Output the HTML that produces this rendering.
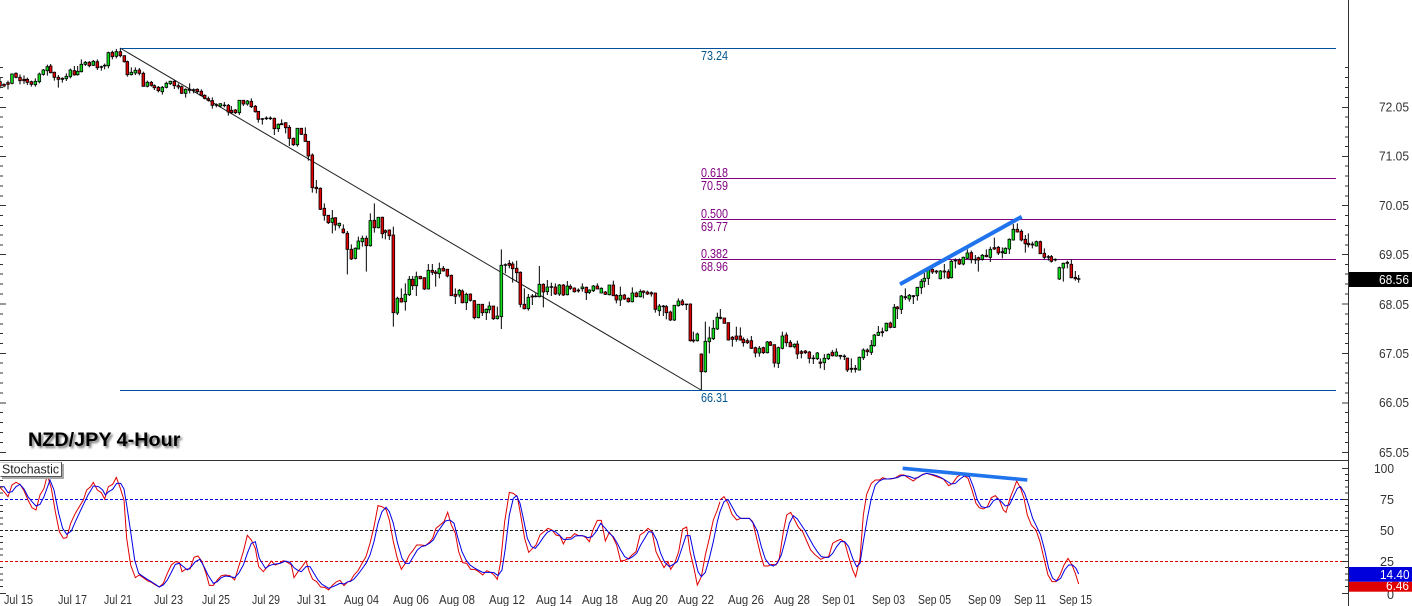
<!DOCTYPE html>
<html>
<head>
<meta charset="utf-8">
<title>NZD/JPY 4-Hour</title>
<style>
html,body{margin:0;padding:0;background:#fff;width:1412px;height:606px;overflow:hidden}
svg{position:absolute;left:0;top:0}
text{font-family:"Liberation Sans",sans-serif;font-size:12.5px}
.ax{fill:#333}
.w{fill:none;stroke:#000;stroke-width:3}
.g{fill:#0ee01a;stroke:#000;stroke-width:2.4}
.r{fill:#e00000;stroke:#000;stroke-width:2.4}
#title{position:absolute;left:28px;top:430px;font:bold 19.8px/20px "Liberation Sans",sans-serif;color:#000;text-shadow:2px 2px 2px #7a7a7a;white-space:nowrap}
</style>
</head>
<body>
<svg width="1412" height="606" viewBox="0 0 1412 606" xmlns="http://www.w3.org/2000/svg">
<rect width="1412" height="606" fill="#fff"/>

<!-- trend line -->
<path d="M120 48L701 390" stroke="#222" stroke-width="1" fill="none"/>

<!-- fib lines -->
<path d="M120 48.5H1336M120 390.5H1336" stroke="#00509e" stroke-width="1" fill="none"/>
<path d="M701 178.5H1336M701 219.5H1336M701 259.5H1336" stroke="#800080" stroke-width="1" fill="none"/>

<!-- candles part 1 -->
<g transform="translate(0,30) scale(.33333)">
<path class="w" d="M0 143V175M12 160V172M24 152V178M36 130V163M48 127V145M60 133V163M72 136V162M82 143V165M94 152V170M106 145V170M118 128V160M130 117V137M142 104V137M152 102V130M163 125V152M175 135V173M187 142V158M199 130V153M211 116V145M223 108V137M233 108V137M244 88V127M256 93V108M268 93V112M280 90V108M292 88V120M304 107V122M314 101V118M325 65V115M337 62V88M349 57V85M361 55V82M373 77V98M382 92V140M394 112V136M406 112V135M418 114V136M430 125V170M442 152V172M454 153V170M463 163V180M475 168V187M487 168V194M499 155V175M511 152V165M523 150V177M535 160V178M545 167V192M557 175V203M569 160V190M581 175V190M592 175V190M604 178V198M614 193V208M625 200V215M637 202V236M649 220V232M661 220V232M673 216V232M685 222V257M694 228V252M706 237V252M718 211V255M730 210V228M742 210V227M754 205V234M766 225V248M775 244V278M787 264V284M799 259V270M811 259V270M823 263V315M835 280V306M845 268V285M857 277V310M868 285V348M880 323V348M892 295V350M904 295V315M916 292V336M925 334V392M937 370V488M949 450V490M961 472V540M973 520V572M985 556V582M997 540V610M1006 562V602M1018 578V595M1030 583V611M1042 603V733"/>
<path class="g" d="M32 132h8V160h-8zM102 154h8V164h-8zM114 132h8V155h-8zM126 120h8V133h-8zM138 110h8V122h-8zM195 139h8V146h-8zM207 120h8V140h-8zM229 124h8V134h-8zM240 103h8V125h-8zM252 97h8V103h-8zM276 94h8V106h-8zM321 68h8V107h-8zM345 65h8V79h-8zM390 127h8V134h-8zM402 121h8V129h-8zM438 157h8V169h-8zM483 172h8V185h-8zM495 160h8V172h-8zM507 154h8V161h-8zM553 178h8V190h-8zM657 221h8V228h-8zM714 211h8V248h-8zM738 213h8V222h-8zM831 283h8V296h-8zM888 295h8V344h-8zM993 565h8V577h-8zM1014 580h8V587h-8z"/>
<path class="r" d="M-4 155h8V168h-8zM8 163h8V168h-8zM20 158h8V163h-8zM44 130h8V142h-8zM56 142h8V152h-8zM68 148h8V152h-8zM78 148h8V157h-8zM90 155h8V163h-8zM148 108h8V128h-8zM159 127h8V142h-8zM171 142h8V148h-8zM183 145h8V148h-8zM219 122h8V135h-8zM264 97h8V107h-8zM288 95h8V113h-8zM300 110h8V112h-8zM310 106h8V108h-8zM333 67h8V80h-8zM357 65h8V77h-8zM369 77h8V95h-8zM378 95h8V134h-8zM414 120h8V130h-8zM426 130h8V169h-8zM450 157h8V166h-8zM459 167h8V173h-8zM471 172h8V182h-8zM519 154h8V167h-8zM531 167h8V171h-8zM541 170h8V190h-8zM565 178h8V181h-8zM577 179h8V181h-8zM588 178h8V185h-8zM600 184h8V196h-8zM610 196h8V205h-8zM621 206h8V211h-8zM633 212h8V226h-8zM645 224h8V226h-8zM669 225h8V227h-8zM681 226h8V246h-8zM690 241h8V248h-8zM702 240h8V248h-8zM726 211h8V222h-8zM750 214h8V230h-8zM762 229h8V245h-8zM771 244h8V268h-8zM783 266h8V268h-8zM795 264h8V266h-8zM807 264h8V266h-8zM819 265h8V296h-8zM841 281h8V284h-8zM853 278h8V293h-8zM864 292h8V325h-8zM876 325h8V344h-8zM900 295h8V313h-8zM912 313h8V334h-8zM921 334h8V378h-8zM933 375h8V473h-8zM945 472h8V476h-8zM957 475h8V538h-8zM969 535h8V556h-8zM981 556h8V578h-8zM1002 563h8V585h-8zM1026 597h8V608h-8zM1038 610h8V658h-8z"/>
</g>

<!-- candles part 2 -->
<g transform="translate(340,190) scale(.33333)">
<path class="w" d="M34 163V210M46 172V208M55 140V178M67 137V170M79 137V245M91 70V170M103 40V128M115 82V115M127 80V145M136 118V148M148 118V150M160 110V410M172 320V375M184 295V338M196 280V362M208 258V318M218 258V300M229 245V318M241 258V268M253 262V300M265 222V298M277 222V255M287 240V290M298 218V265M310 228V245M322 237V262M334 254V318M346 295V342M358 297V322M367 298V340M379 308V360M391 310V335M403 330V388M415 343V385M427 342V378M439 355V390M448 335V370M460 348V390M472 350V388M484 178V417M496 220V250M508 210V235M518 215V278M530 212V275M541 244V352M553 295V358M565 312V362M577 312V345M587 310V322M598 228V322M610 280V352M622 270V315M634 278V318M646 280V315M658 282V318M670 282V318M682 273V316M691 283V300M703 292V308M715 295V308M727 280V305M739 290V330M748 298V312M760 285V306M772 280V298M784 292V310M796 303V315M808 285V316M820 272V318M829 312V340M841 290V348M853 312V330M865 322V338M877 292V337M889 305V322M901 298V322M910 301V325M922 302V315M934 304V320M946 308V368M958 342V378M970 345V378M979 345V388M991 362V393M1003 345V393M1015 325V350M1027 327V347M1039 342V360M1051 340V455M1060 425V458M1072 428V455M1084 490V600M1096 395V548"/>
<path class="g" d="M42 175h8V205h-8zM51 153h8V177h-8zM63 145h8V155h-8zM87 92h8V167h-8zM111 82h8V113h-8zM168 325h8V369h-8zM192 313h8V335h-8zM204 268h8V314h-8zM225 260h8V287h-8zM261 241h8V297h-8zM294 236h8V251h-8zM354 301h8V315h-8zM375 313h8V338h-8zM411 343h8V383h-8zM435 358h8V368h-8zM444 348h8V359h-8zM468 378h8V386h-8zM480 226h8V380h-8zM561 322h8V356h-8zM594 283h8V320h-8zM618 291h8V305h-8zM654 285h8V312h-8zM678 288h8V314h-8zM723 291h8V296h-8zM744 300h8V307h-8zM756 288h8V302h-8zM780 295h8V309h-8zM804 285h8V314h-8zM837 316h8V330h-8zM873 309h8V335h-8zM897 305h8V320h-8zM954 348h8V362h-8zM999 346h8V390h-8zM1011 333h8V347h-8zM1068 432h8V452h-8zM1092 454h8V545h-8z"/>
<path class="r" d="M30 178h8V207h-8zM75 145h8V167h-8zM99 91h8V113h-8zM123 82h8V131h-8zM132 122h8V127h-8zM144 120h8V137h-8zM156 135h8V368h-8zM180 325h8V336h-8zM214 268h8V287h-8zM237 259h8V266h-8zM249 263h8V297h-8zM273 241h8V247h-8zM283 246h8V250h-8zM306 235h8V243h-8zM318 238h8V258h-8zM330 256h8V317h-8zM342 313h8V319h-8zM363 303h8V338h-8zM387 312h8V331h-8zM399 332h8V383h-8zM423 343h8V368h-8zM456 348h8V386h-8zM492 224h8V226h-8zM504 220h8V226h-8zM514 222h8V236h-8zM526 235h8V248h-8zM537 247h8V343h-8zM549 343h8V356h-8zM573 318h8V321h-8zM583 318h8V320h-8zM606 283h8V306h-8zM630 290h8V292h-8zM642 291h8V312h-8zM666 285h8V315h-8zM687 289h8V295h-8zM699 294h8V305h-8zM711 300h8V303h-8zM735 292h8V308h-8zM768 288h8V297h-8zM792 306h8V313h-8zM816 285h8V317h-8zM825 316h8V330h-8zM849 315h8V327h-8zM861 325h8V335h-8zM885 309h8V320h-8zM906 303h8V307h-8zM918 306h8V312h-8zM930 308h8V312h-8zM942 309h8V358h-8zM966 348h8V350h-8zM975 350h8V368h-8zM987 366h8V390h-8zM1023 333h8V344h-8zM1035 342h8V344h-8zM1047 342h8V452h-8zM1056 450h8V453h-8zM1080 492h8V545h-8z"/>
</g>

<!-- candles part 3 -->
<g transform="translate(690,200) scale(.33333)">
<path class="w" d="M58 380V460M70 360V420M82 338V390M91 327V358M103 354V370M115 368V422M127 408V440M139 380V425M151 382V422M160 412V440M172 415V432M184 408V447M196 440V472M208 438V470M220 440V462M232 423V460M241 423V438M253 434V502M265 440V504M277 395V448M289 397V440M301 420V442M313 430V445M322 422V477M334 450V475M346 450V462M358 453V490M370 465V492M382 456V480M391 475V505M403 462V510M415 460V480M427 450V470M439 445V470M451 465V478M463 463V480M472 474V516M484 475V518M496 495V518M508 470V512M520 445V480M532 445V468M544 420V465M553 402V440M565 378V408M577 383V410M589 368V395M601 365V385M613 312V384M622 318V357M634 285V342M646 265V300M658 282V305M670 285V312M682 262V302M694 237V282M703 215V262M715 200V255M727 205V222M739 210V222M751 210V238M763 192V235M775 208V237M784 180V235M796 175V205M808 175V195M820 170V196M832 148V178M844 152V190M856 165V192M865 170V215M877 162V182M889 148V172M901 140V186M913 113V150M925 138V165M937 142V175M946 142V162M958 115V162M970 72V122M982 70V98M994 88V124M1006 105V158M1015 100V142M1027 125V145M1039 122V140M1051 122V162M1063 145V178M1075 165V182M1084 165V188M1096 175V184M1108 200V240M1120 188V245M1132 182V205M1144 178V235M1156 213V242M1166 225V248"/>
<path class="g" d="M54 414h8V425h-8zM66 385h8V416h-8zM78 352h8V387h-8zM204 445h8V459h-8zM228 426h8V458h-8zM261 443h8V490h-8zM273 408h8V445h-8zM309 433h8V440h-8zM378 459h8V476h-8zM399 475h8V488h-8zM411 463h8V476h-8zM435 456h8V468h-8zM504 472h8V510h-8zM516 450h8V473h-8zM540 436h8V457h-8zM549 405h8V437h-8zM561 397h8V406h-8zM585 370h8V392h-8zM609 322h8V382h-8zM630 288h8V328h-8zM654 286h8V297h-8zM678 262h8V287h-8zM690 244h8V263h-8zM699 235h8V244h-8zM711 208h8V235h-8zM747 213h8V236h-8zM780 184h8V233h-8zM816 172h8V192h-8zM828 159h8V175h-8zM873 166h8V178h-8zM897 148h8V172h-8zM942 145h8V160h-8zM954 118h8V147h-8zM966 88h8V120h-8zM1035 125h8V138h-8zM1104 203h8V237h-8zM1116 190h8V204h-8z"/>
<path class="r" d="M87 352h8V355h-8zM99 354h8V370h-8zM111 368h8V420h-8zM123 412h8V418h-8zM135 408h8V418h-8zM147 408h8V420h-8zM156 418h8V428h-8zM168 422h8V428h-8zM180 422h8V445h-8zM192 443h8V459h-8zM216 443h8V458h-8zM237 426h8V436h-8zM249 434h8V489h-8zM285 405h8V428h-8zM297 427h8V440h-8zM318 432h8V462h-8zM330 455h8V460h-8zM342 453h8V458h-8zM354 456h8V475h-8zM366 474h8V476h-8zM387 486h8V490h-8zM423 457h8V467h-8zM447 466h8V469h-8zM459 468h8V470h-8zM468 474h8V510h-8zM480 505h8V508h-8zM492 505h8V508h-8zM528 450h8V455h-8zM573 395h8V398h-8zM597 369h8V382h-8zM618 321h8V326h-8zM642 290h8V293h-8zM666 287h8V290h-8zM723 208h8V216h-8zM735 213h8V216h-8zM759 213h8V216h-8zM771 215h8V234h-8zM792 181h8V183h-8zM804 180h8V192h-8zM840 158h8V179h-8zM852 178h8V180h-8zM861 173h8V180h-8zM885 166h8V170h-8zM909 143h8V147h-8zM921 142h8V159h-8zM933 155h8V158h-8zM978 88h8V96h-8zM990 94h8V120h-8zM1002 118h8V131h-8zM1011 130h8V134h-8zM1023 132h8V135h-8zM1047 125h8V161h-8zM1059 160h8V172h-8zM1071 170h8V172h-8zM1080 170h8V184h-8zM1092 178h8V180h-8zM1128 187h8V190h-8zM1140 193h8V233h-8zM1152 232h8V236h-8zM1162 236h8V238h-8z"/>
</g>

<!-- bold hand-drawn trend line, main chart -->
<path d="M900 284.3L1021.7 216.7" stroke="#1f74ee" stroke-width="4" stroke-linecap="butt" fill="none"/>

<!-- fib labels -->
<text x="701" y="60" fill="#00568f" textLength="27" lengthAdjust="spacingAndGlyphs">73.24</text>
<text x="701" y="177" fill="#800080" textLength="27" lengthAdjust="spacingAndGlyphs">0.618</text>
<text x="701" y="190" fill="#800080" textLength="27" lengthAdjust="spacingAndGlyphs">70.59</text>
<text x="701" y="218" fill="#800080" textLength="27" lengthAdjust="spacingAndGlyphs">0.500</text>
<text x="701" y="231" fill="#800080" textLength="27" lengthAdjust="spacingAndGlyphs">69.77</text>
<text x="701" y="258" fill="#800080" textLength="27" lengthAdjust="spacingAndGlyphs">0.382</text>
<text x="701" y="271" fill="#800080" textLength="27" lengthAdjust="spacingAndGlyphs">68.96</text>
<text x="701" y="402" fill="#00568f" textLength="27" lengthAdjust="spacingAndGlyphs">66.31</text>

<!-- separator & axis -->
<path d="M0 460.5H1348" stroke="#333" stroke-width="1"/>
<path d="M1348.5 0V606" stroke="#333" stroke-width="1"/>

<!-- dashed levels -->
<path d="M0 499.5H1342" stroke="#0000e6" stroke-width="1" stroke-dasharray="3 2"/>
<path d="M0 530.5H1342" stroke="#222" stroke-width="1" stroke-dasharray="3 2"/>
<path d="M0 561.5H1342" stroke="#dd0000" stroke-width="1" stroke-dasharray="3 2"/>

<!-- stochastic lines -->
<g transform="translate(0,425) scale(.33333)" fill="none" stroke-width="3">
<polyline stroke="#e00000" points="0,187 12,200 24,215 36,180 48,172 60,178 72,197 84,225 96,248 108,255 120,210 132,190 142,150 154,190 166,260 178,320 190,340 200,338 212,295 226,265 238,245 250,225 260,195 272,185 280,172 292,195 304,203 314,222 325,185 338,178 349,157 361,190 372,225 380,340 392,420 406,458 418,450 430,458 442,467 454,472 466,480 478,486 490,475 502,445 514,420 526,410 538,412 546,440 558,432 570,432 582,397 594,393 606,410 618,445 628,481 640,481 652,465 664,452 676,450 690,452 704,465 716,425 730,380 742,331 754,345 766,370 776,425 790,440 802,425 814,408 826,420 838,415 850,407 862,412 874,420 882,458 894,440 906,425 918,408 928,440 938,463 950,470 962,486 974,487 986,495 998,480 1010,470 1020,466 1032,482 1044,470 1051,470"/>
<polyline stroke="#0000e6" points="0,185 12,185 24,203 36,200 48,185 60,178 72,192 84,215 96,230 108,243 120,238 132,215 150,165 162,195 176,265 188,310 200,328 214,318 226,290 240,260 252,235 264,210 276,190 280,183 296,185 308,195 316,210 326,200 338,193 350,175 362,175 372,192 380,240 392,320 404,405 416,445 430,455 442,463 454,470 466,478 478,486 490,480 502,465 514,442 526,418 538,415 550,425 562,435 574,425 586,410 600,403 612,425 624,450 640,475 652,470 664,458 676,453 690,455 704,458 716,445 730,420 742,385 754,355 766,350 778,400 796,430 808,422 820,418 840,415 856,408 870,412 882,428 892,435 904,440 918,425 930,425 942,445 954,465 966,478 978,485 986,490 998,485 1010,480 1020,475 1032,477 1044,470 1051,468"/>
</g>
<g transform="translate(350,455) scale(.33333)" fill="none" stroke-width="3">
<polyline stroke="#e00000" points="0,380 12,360 24,347 36,325 48,305 60,265 72,215 84,152 96,155 108,163 118,195 130,260 142,310 154,343 166,325 178,300 190,285 200,270 214,270 226,272 238,262 248,250 258,220 270,210 282,200 293,172 304,210 316,235 326,290 338,323 350,325 362,343 374,343 386,350 398,360 410,347 422,352 432,360 442,373 452,320 464,200 478,112 490,115 502,125 512,180 524,250 536,292 548,280 558,270 570,240 582,230 594,220 606,225 618,240 630,243 640,267 650,248 662,248 674,236 686,242 698,242 708,248 718,260 730,222 742,196 754,196 766,258 778,232 788,245 800,270 812,318 824,316 836,310 846,300 858,290 870,240 882,232 894,220 906,230 918,290 930,315 942,338 954,320 962,343 974,325 986,290 998,222 1010,216 1020,290 1032,340 1042,390 1054,365 1066,300 1078,250 1090,195 1102,165 1110,140"/>
<polyline stroke="#0000e6" points="0,380 12,372 24,358 36,342 48,325 60,300 72,260 84,205 96,170 108,157 118,170 130,205 142,262 156,310 166,325 178,325 190,305 202,285 214,275 226,272 238,265 250,255 262,232 274,215 286,198 300,195 312,205 324,250 336,290 348,315 360,330 372,338 384,345 398,352 410,352 422,352 432,353 444,362 456,345 466,280 478,180 490,130 500,122 510,145 520,190 532,250 544,275 556,280 568,265 580,247 592,232 604,226 616,230 628,240 640,253 652,253 664,252 676,243 690,242 702,243 714,248 726,245 738,230 752,205 766,220 778,235 790,245 802,265 812,285 824,305 836,312 848,305 860,295 872,270 884,250 896,230 908,232 920,255 932,295 944,322 958,335 970,328 982,320 994,285 1008,242 1020,242 1032,300 1044,350 1054,365 1066,352 1078,310 1090,260 1102,200 1110,170"/>
</g>
<g transform="translate(720,455) scale(.33333)" fill="none" stroke-width="3">
<polyline stroke="#e00000" points="0,135 12,125 24,145 36,178 50,195 62,190 74,190 88,190 98,200 110,250 122,300 132,333 144,333 156,328 168,330 178,310 190,230 200,180 212,172 224,195 236,218 248,230 260,258 272,285 284,298 302,313 316,307 326,305 338,265 350,258 362,253 374,262 386,305 398,345 407,365 420,310 430,180 440,118 454,85 466,75 478,75 488,68 500,72 512,72 524,70 540,60 552,60 564,68 580,78 592,68 608,58 620,55 636,60 650,65 670,72 686,92 698,85 712,65 726,58 744,70 756,105 768,145 778,158 790,162 802,155 814,128 826,122 838,135 850,165 858,172 870,130 880,105 890,78 902,100 912,130 922,180 934,210 948,225 960,260 972,310 984,360 996,380 1008,380 1020,360 1032,330 1044,310 1056,330 1066,355 1076,387"/>
<polyline stroke="#0000e6" points="0,170 12,140 24,133 36,155 50,180 62,190 74,190 88,190 100,205 112,228 124,275 136,312 148,328 160,333 172,325 184,300 196,255 208,205 220,182 232,192 244,210 256,228 268,250 280,272 292,290 304,305 316,307 326,307 338,295 350,275 362,260 374,260 386,275 398,310 410,335 420,325 430,260 442,190 454,130 466,90 478,78 490,72 504,72 518,70 532,68 544,62 556,62 570,65 582,70 594,68 606,60 620,55 636,58 650,62 664,68 680,78 694,87 706,85 720,72 734,62 748,65 760,95 772,135 784,155 796,158 808,155 820,138 832,130 844,140 856,153 868,150 880,125 892,100 902,95 914,115 926,150 938,190 950,215 962,240 974,285 986,340 998,370 1010,378 1022,370 1034,345 1046,330 1058,330 1068,340 1076,357"/>
</g>

<!-- bold hand-drawn line, stochastic -->
<path d="M902.7 468.3L1027.3 480" stroke="#1f74ee" stroke-width="3.6" fill="none"/>

<!-- right axis ticks -->
<path stroke="#333" stroke-width="1" fill="none" d="M1345 67.5H1348M1345 77.5H1348M1345 87.5H1348M1345 97.5H1348M1342 107.5H1348M1345 117H1348M1345 127H1348M1345 137H1348M1345 146.5H1348M1342 156.5H1348M1345 166H1348M1345 176H1348M1345 186H1348M1345 196H1348M1342 205.5H1348M1345 215.5H1348M1345 225.5H1348M1345 235H1348M1345 245H1348M1342 254.5H1348M1345 264.5H1348M1345 274H1348M1345 284H1348M1345 294H1348M1342 304H1348M1345 314H1348M1345 324H1348M1345 333.5H1348M1345 343.5H1348M1342 353.5H1348M1345 363H1348M1345 373H1348M1345 383H1348M1345 393H1348M1342 403H1348M1345 412.5H1348M1345 422.5H1348M1345 432.5H1348M1345 442.5H1348M1342 452.5H1348M1342 468.5H1348M1345 474.5H1348M1345 480.5H1348M1345 487H1348M1345 493H1348M1342 499.5H1348M1345 505.5H1348M1345 511.5H1348M1345 518H1348M1345 524H1348M1342 530.5H1348M1345 536.5H1348M1345 542.5H1348M1345 549H1348M1345 555H1348M1342 561.5H1348M1345 567.5H1348M1345 574H1348M1345 580H1348M1345 586.5H1348M1342 593.5H1348"/>
<!-- left edge ticks -->
<path stroke="#333" stroke-width="1" fill="none" d="M0 67.5H3M0 77.5H3M0 87.5H3M0 97.5H3M0 107.5H6M0 117H3M0 127H3M0 137H3M0 146.5H3M0 156.5H6M0 166H3M0 176H3M0 186H3M0 196H3M0 205.5H6M0 215.5H3M0 225.5H3M0 235H3M0 245H3M0 254.5H6M0 264.5H3M0 274H3M0 284H3M0 294H3M0 304H6M0 314H3M0 324H3M0 333.5H3M0 343.5H3M0 353.5H6M0 363H3M0 373H3M0 383H3M0 393H3M0 403H6M0 412.5H3M0 422.5H3M0 432.5H3M0 442.5H3M0 452.5H6M0 480.5H3M0 487H3M0 493H3M0 505.5H3M0 511.5H3M0 518H3M0 524H3M0 536.5H3M0 542.5H3M0 549H3M0 555H3M0 567.5H3M0 574H3M0 580H3M0 586.5H3M0 593.5H6"/>

<!-- right axis labels -->
<g class="ax">
<text x="1379" y="111.5" textLength="30" lengthAdjust="spacingAndGlyphs">72.05</text>
<text x="1379" y="160.5" textLength="30" lengthAdjust="spacingAndGlyphs">71.05</text>
<text x="1379" y="210" textLength="30" lengthAdjust="spacingAndGlyphs">70.05</text>
<text x="1379" y="259" textLength="30" lengthAdjust="spacingAndGlyphs">69.05</text>
<text x="1379" y="309" textLength="30" lengthAdjust="spacingAndGlyphs">68.05</text>
<text x="1379" y="358" textLength="30" lengthAdjust="spacingAndGlyphs">67.05</text>
<text x="1379" y="407" textLength="30" lengthAdjust="spacingAndGlyphs">66.05</text>
<text x="1379" y="457" textLength="30" lengthAdjust="spacingAndGlyphs">65.05</text>
<text x="1374" y="473" textLength="20" lengthAdjust="spacingAndGlyphs">100</text>
<text x="1380" y="504" textLength="14" lengthAdjust="spacingAndGlyphs">75</text>
<text x="1380" y="535" textLength="14" lengthAdjust="spacingAndGlyphs">50</text>
<text x="1380" y="566" textLength="14" lengthAdjust="spacingAndGlyphs">25</text>
<text x="1387" y="599" textLength="7" lengthAdjust="spacingAndGlyphs">0</text>
</g>

<!-- price tags -->
<rect x="1349" y="272" width="63" height="15" fill="#000"/>
<text x="1379" y="284" fill="#fff" textLength="30" lengthAdjust="spacingAndGlyphs">68.56</text>
<rect x="1349" y="581.7" width="63" height="10" fill="#e00000"/>
<text x="1386" y="590" fill="#fff" textLength="23" lengthAdjust="spacingAndGlyphs">6.46</text>
<rect x="1349" y="567" width="63" height="14.7" fill="#0000dd"/>
<text x="1380" y="579" fill="#fff" textLength="29.5" lengthAdjust="spacingAndGlyphs">14.40</text>

<!-- date labels -->
<g class="ax">
<text x="4" y="604" textLength="29" lengthAdjust="spacingAndGlyphs">Jul 15</text>
<text x="58" y="604" textLength="29" lengthAdjust="spacingAndGlyphs">Jul 17</text>
<text x="104" y="604" textLength="28" lengthAdjust="spacingAndGlyphs">Jul 21</text>
<text x="154" y="604" textLength="29" lengthAdjust="spacingAndGlyphs">Jul 23</text>
<text x="202" y="604" textLength="28" lengthAdjust="spacingAndGlyphs">Jul 25</text>
<text x="252" y="604" textLength="28" lengthAdjust="spacingAndGlyphs">Jul 29</text>
<text x="297" y="604" textLength="29" lengthAdjust="spacingAndGlyphs">Jul 31</text>
<text x="344" y="604" textLength="35" lengthAdjust="spacingAndGlyphs">Aug 04</text>
<text x="393" y="604" textLength="36" lengthAdjust="spacingAndGlyphs">Aug 06</text>
<text x="439" y="604" textLength="36" lengthAdjust="spacingAndGlyphs">Aug 08</text>
<text x="489" y="604" textLength="36" lengthAdjust="spacingAndGlyphs">Aug 12</text>
<text x="536" y="604" textLength="36" lengthAdjust="spacingAndGlyphs">Aug 14</text>
<text x="582" y="604" textLength="36" lengthAdjust="spacingAndGlyphs">Aug 18</text>
<text x="632" y="604" textLength="36" lengthAdjust="spacingAndGlyphs">Aug 20</text>
<text x="678" y="604" textLength="36" lengthAdjust="spacingAndGlyphs">Aug 22</text>
<text x="728" y="604" textLength="36" lengthAdjust="spacingAndGlyphs">Aug 26</text>
<text x="774" y="604" textLength="36" lengthAdjust="spacingAndGlyphs">Aug 28</text>
<text x="822" y="604" textLength="33" lengthAdjust="spacingAndGlyphs">Sep 01</text>
<text x="872" y="604" textLength="33" lengthAdjust="spacingAndGlyphs">Sep 03</text>
<text x="918" y="604" textLength="33" lengthAdjust="spacingAndGlyphs">Sep 05</text>
<text x="968" y="604" textLength="33" lengthAdjust="spacingAndGlyphs">Sep 09</text>
<text x="1014" y="604" textLength="32" lengthAdjust="spacingAndGlyphs">Sep 11</text>
<text x="1059" y="604" textLength="33" lengthAdjust="spacingAndGlyphs">Sep 15</text>
</g>

<!-- Stochastic label -->
<rect x="2" y="464" width="62" height="15" fill="#a8a8a8"/>
<rect x="0" y="462" width="62" height="15" fill="#fff"/>
<path d="M0.5 462.5H61.5V476.5H0.5" fill="none" stroke="#555" stroke-width="1"/>
<path d="M0.5 462.5H61" fill="none" stroke="#ccc" stroke-width="1"/>
<text x="2" y="473.5" fill="#222" textLength="57" lengthAdjust="spacingAndGlyphs">Stochastic</text>
</svg>
<div id="title">NZD/JPY 4-Hour</div>
</body>
</html>
